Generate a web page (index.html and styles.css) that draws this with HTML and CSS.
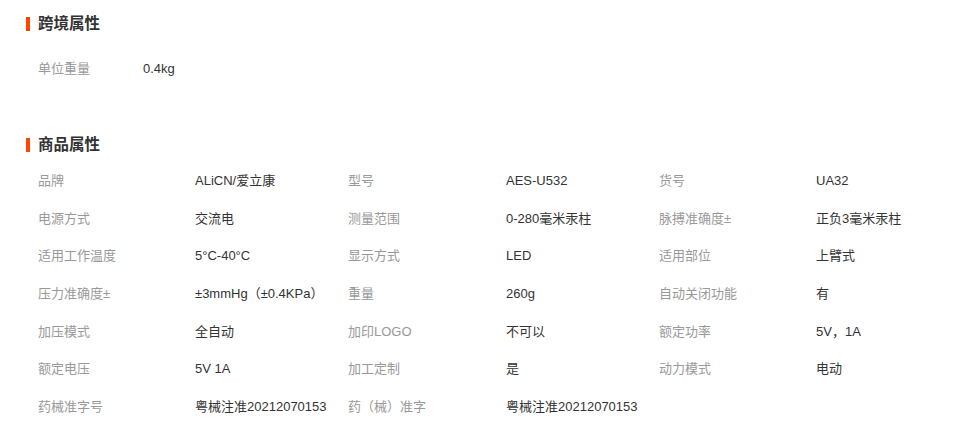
FILE: index.html
```html
<!DOCTYPE html>
<html lang="zh-CN">
<head>
    <meta charset="UTF-8">
    <title>商品属性</title>
    <link rel="stylesheet" href="styles.css">
</head>
<body>
    <div class="attrs">
        <div class="section cross">
            <h3 class="title">跨境属性</h3>
            <div class="grid grid-cross">
                <span class="label">单位重量</span><span class="value">0.4kg</span>
            </div>
        </div>

        <div class="section">
            <h3 class="title">商品属性</h3>
            <div class="grid grid-product">
                <span class="label">品牌</span><span class="value">ALiCN/爱立康</span>
                <span class="label">型号</span><span class="value">AES-U532</span>
                <span class="label">货号</span><span class="value">UA32</span>

                <span class="label">电源方式</span><span class="value">交流电</span>
                <span class="label">测量范围</span><span class="value">0-280毫米汞柱</span>
                <span class="label">脉搏准确度±</span><span class="value">正负3毫米汞柱</span>

                <span class="label">适用工作温度</span><span class="value">5°C-40°C</span>
                <span class="label">显示方式</span><span class="value">LED</span>
                <span class="label">适用部位</span><span class="value">上臂式</span>

                <span class="label">压力准确度±</span><span class="value">±3mmHg（±0.4KPa）</span>
                <span class="label">重量</span><span class="value">260g</span>
                <span class="label">自动关闭功能</span><span class="value">有</span>

                <span class="label">加压模式</span><span class="value">全自动</span>
                <span class="label">加印LOGO</span><span class="value">不可以</span>
                <span class="label">额定功率</span><span class="value">5V，1A</span>

                <span class="label">额定电压</span><span class="value">5V 1A</span>
                <span class="label">加工定制</span><span class="value">是</span>
                <span class="label">动力模式</span><span class="value">电动</span>

                <span class="label">药械准字号</span><span class="value">粤械注准20212070153</span>
                <span class="label">药（械）准字</span><span class="value">粤械注准20212070153</span>
            </div>
        </div>
    </div>
</body>
</html>
```

FILE: styles.css
```css
body { margin: 0; background: #fff; font-family: "Liberation Sans", "Noto Sans CJK SC", sans-serif; font-size: 13px; color: #333; }
.attrs { padding: 14px 0 0 26px; }
.section.cross { height: 121px; }
.title { margin: 0; height: 20px; line-height: 20px; font-size: 15.5px; font-weight: bold; color: #333; position: relative; padding-left: 12px; }
.title::before { content: ""; position: absolute; left: 0; top: 3px; width: 4px; height: 14px; background: #ff4400; }
.grid { display: grid; padding-left: 12px; }
.grid-cross { grid-template-columns: 105px auto; margin-top: 16px; }
.grid-product { grid-template-columns: 157px 153px 158px 153px 157px 153px; margin-top: 7px; }
.label, .value { height: 37.67px; line-height: 37.67px; white-space: nowrap; }
.label { color: #999; }
.value { color: #333; }
```
